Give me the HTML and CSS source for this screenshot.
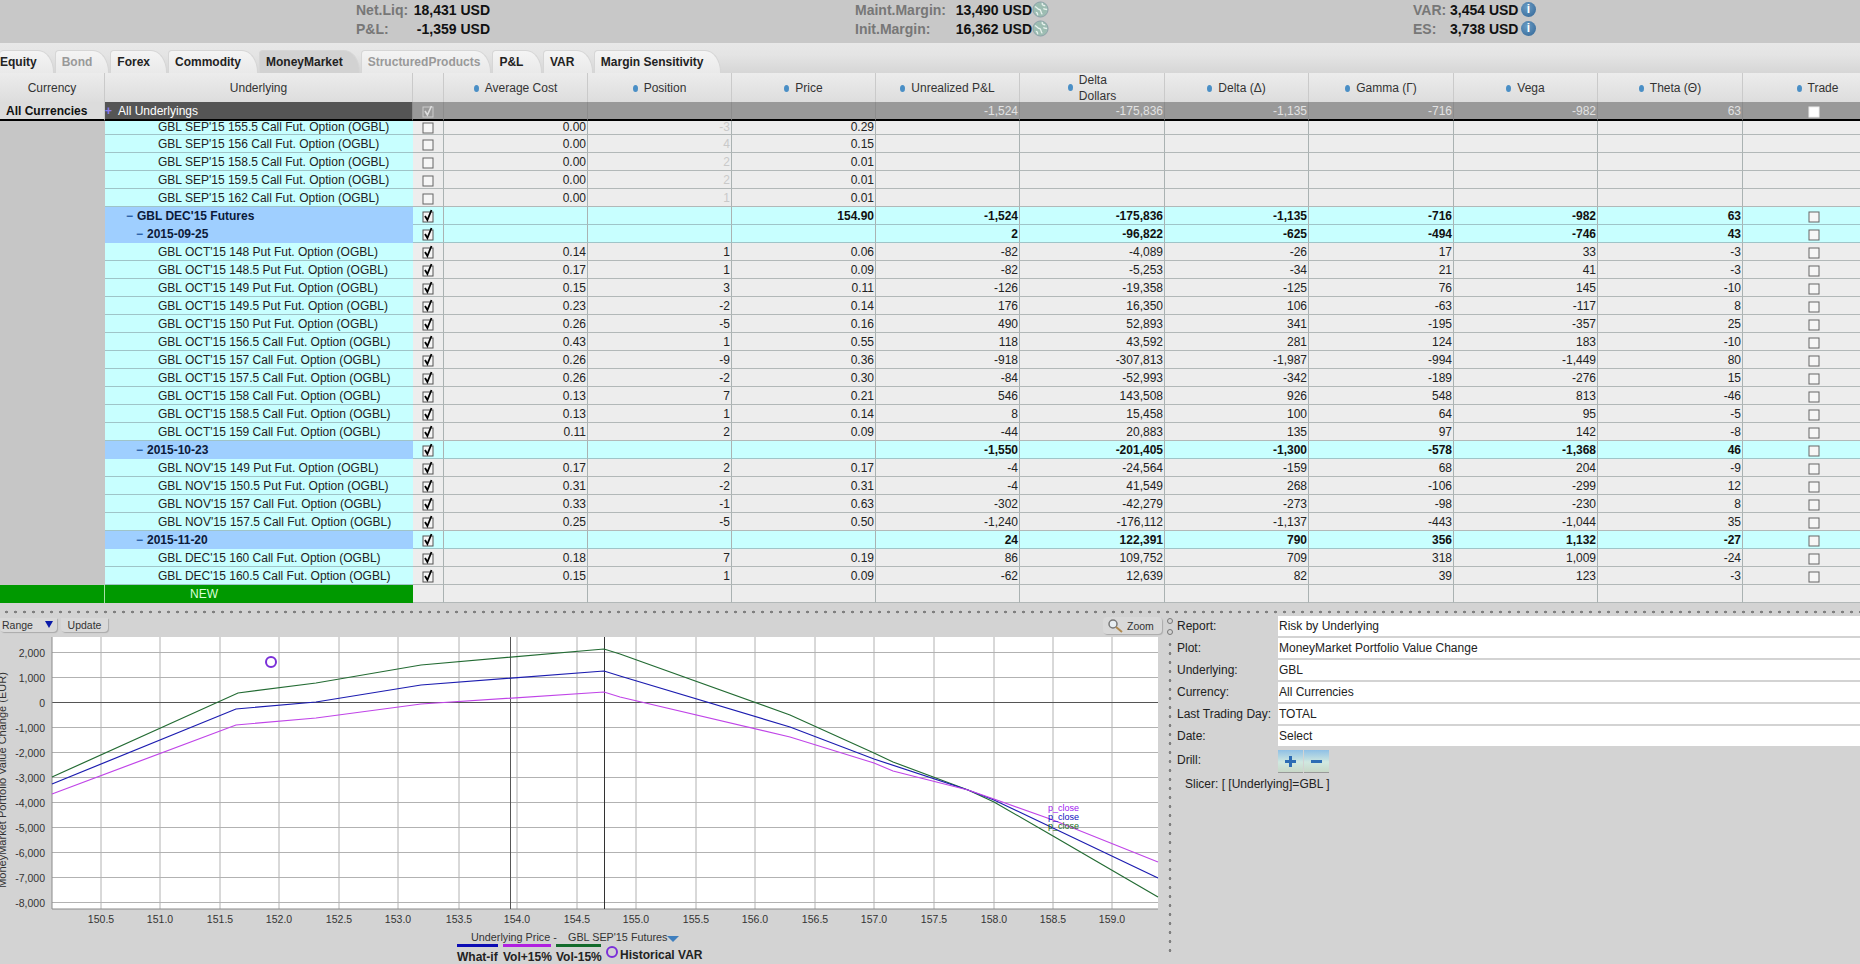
FILE: index.html
```html
<!DOCTYPE html>
<html lang="en">
<head>
    <meta charset="UTF-8">
    <meta name="viewport" content="width=device-width, initial-scale=1.0">
    <title>Risk Navigator</title>
    <link rel="stylesheet" href="styles.css">
</head>
<body>
    <svg class="defs" width="0" height="0">
        <symbol id="cb-off" viewBox="0 0 12 14"><rect x="1" y="3" width="10" height="10" fill="#f6f6f6" stroke="#666"/></symbol>
        <symbol id="cb-on" viewBox="0 0 12 14"><rect x="1" y="3" width="10" height="10" fill="#f6f6f6" stroke="#555"/><path d="M3 7l2.4 4L9.5 1" fill="none" stroke="#000" stroke-width="1.8"/></symbol>
        <symbol id="cb-mute" viewBox="0 0 12 14"><rect x="1" y="3" width="10" height="10" fill="#999" stroke="#ccc"/><path d="M3 7l2.4 4L9.5 2" fill="none" stroke="#ddd" stroke-width="1.6"/></symbol>
        <symbol id="cb-white" viewBox="0 0 12 14"><rect x="1" y="3" width="10" height="10" fill="#fff" stroke="#eee"/></symbol>
        <symbol id="globe" viewBox="0 0 18 18"><circle cx="9" cy="9" r="8" fill="#9dbdb2" stroke="#8aa0a8"/><path d="M3 6c3 1 3 3 5 3s1 4 3 5M11 2c-1 2 1 3 3 3M4 12c1 0 2 1 2 3M12 8c1 1 3 1 4 1" fill="none" stroke="#e8f2ee" stroke-width="1.4"/></symbol>
    </svg>

    <div class="summary">
        <div class="sum-group net">
            <span class="sum-label">Net.Liq:</span><span class="sum-value">18,431 USD</span>
            <span class="sum-label">P&amp;L:</span><span class="sum-value">-1,359 USD</span>
        </div>
        <div class="sum-group margin">
            <span class="sum-label">Maint.Margin:</span><span class="sum-value">13,490 USD</span><svg class="sum-icon"><use href="#globe"/></svg>
            <span class="sum-label">Init.Margin:</span><span class="sum-value">16,362 USD</span><svg class="sum-icon"><use href="#globe"/></svg>
        </div>
        <div class="sum-group var">
            <span class="sum-label">VAR:</span><span class="sum-value">3,454 USD</span><span class="info">i</span>
            <span class="sum-label">ES:</span><span class="sum-value">3,738 USD</span><span class="info">i</span>
        </div>
    </div>

    <div class="tabs">
        <div class="tab first">Equity</div>
        <div class="tab off">Bond</div>
        <div class="tab">Forex</div>
        <div class="tab">Commodity</div>
        <div class="tab active">MoneyMarket</div>
        <div class="tab off narrow">StructuredProducts</div>
        <div class="tab wide">P&amp;L</div>
        <div class="tab wide">VAR</div>
        <div class="tab">Margin Sensitivity</div>
    </div>

    <table class="grid grid-head">
        <colgroup><col class="c1"><col class="c2"><col class="c3"><col class="c4"><col class="c4"><col class="c4"><col class="c4"><col class="c5"><col class="c4"><col class="c5"><col class="c4"><col class="c5"><col class="c6"></colgroup>
        <tr class="heads">
            <th>Currency</th>
            <th>Underlying</th>
            <th></th>
            <th><i class="dot"></i>Average Cost</th>
            <th><i class="dot"></i>Position</th>
            <th><i class="dot"></i>Price</th>
            <th><i class="dot"></i>Unrealized P&amp;L</th>
            <th><div class="two"><i class="dot"></i><span>Delta<br>Dollars</span></div></th>
            <th><i class="dot"></i>Delta (Δ)</th>
            <th><i class="dot"></i>Gamma (Γ)</th>
            <th><i class="dot"></i>Vega</th>
            <th><i class="dot"></i>Theta (Θ)</th>
            <th class="trade-head"><i class="dot"></i>Trade</th>
        </tr>
        <tr class="all">
            <td>All Currencies</td>
            <td><i class="plus">+</i>All Underlyings</td>
            <td><svg class="cb"><use href="#cb-mute"/></svg></td>
            <td></td><td></td><td></td>
            <td>-1,524</td><td>-175,836</td><td>-1,135</td><td>-716</td><td>-982</td><td>63</td>
            <td><svg class="cb"><use href="#cb-white"/></svg></td>
        </tr>
    </table>

    <table class="grid grid-body">
        <colgroup><col class="c1"><col class="c2"><col class="c3"><col class="c4"><col class="c4"><col class="c4"><col class="c4"><col class="c5"><col class="c4"><col class="c5"><col class="c4"><col class="c5"><col class="c6"></colgroup>
        <tr class="first-row"><td></td><td>GBL SEP'15 155.5 Call Fut. Option (OGBL)</td><td><svg class="cb"><use href="#cb-off"/></svg></td><td>0.00</td><td class="faint">-3</td><td>0.29</td><td></td><td></td><td></td><td></td><td></td><td></td><td></td></tr>
        <tr><td></td><td>GBL SEP'15 156 Call Fut. Option (OGBL)</td><td><svg class="cb"><use href="#cb-off"/></svg></td><td>0.00</td><td class="faint">4</td><td>0.15</td><td></td><td></td><td></td><td></td><td></td><td></td><td></td></tr>
        <tr><td></td><td>GBL SEP'15 158.5 Call Fut. Option (OGBL)</td><td><svg class="cb"><use href="#cb-off"/></svg></td><td>0.00</td><td class="faint">2</td><td>0.01</td><td></td><td></td><td></td><td></td><td></td><td></td><td></td></tr>
        <tr><td></td><td>GBL SEP'15 159.5 Call Fut. Option (OGBL)</td><td><svg class="cb"><use href="#cb-off"/></svg></td><td>0.00</td><td class="faint">2</td><td>0.01</td><td></td><td></td><td></td><td></td><td></td><td></td><td></td></tr>
        <tr><td></td><td>GBL SEP'15 162 Call Fut. Option (OGBL)</td><td><svg class="cb"><use href="#cb-off"/></svg></td><td>0.00</td><td class="faint">1</td><td>0.01</td><td></td><td></td><td></td><td></td><td></td><td></td><td></td></tr>
        <tr class="grp lvl1"><td></td><td><i class="minus">−</i>GBL DEC'15 Futures</td><td><svg class="cb"><use href="#cb-on"/></svg></td><td></td><td></td><td>154.90</td><td>-1,524</td><td>-175,836</td><td>-1,135</td><td>-716</td><td>-982</td><td>63</td><td><svg class="cb"><use href="#cb-off"/></svg></td></tr>
        <tr class="grp lvl2"><td></td><td><i class="minus">−</i>2015-09-25</td><td><svg class="cb"><use href="#cb-on"/></svg></td><td></td><td></td><td></td><td>2</td><td>-96,822</td><td>-625</td><td>-494</td><td>-746</td><td>43</td><td><svg class="cb"><use href="#cb-off"/></svg></td></tr>
        <tr><td></td><td>GBL OCT'15 148 Put Fut. Option (OGBL)</td><td><svg class="cb"><use href="#cb-on"/></svg></td><td>0.14</td><td>1</td><td>0.06</td><td>-82</td><td>-4,089</td><td>-26</td><td>17</td><td>33</td><td>-3</td><td><svg class="cb"><use href="#cb-off"/></svg></td></tr>
        <tr><td></td><td>GBL OCT'15 148.5 Put Fut. Option (OGBL)</td><td><svg class="cb"><use href="#cb-on"/></svg></td><td>0.17</td><td>1</td><td>0.09</td><td>-82</td><td>-5,253</td><td>-34</td><td>21</td><td>41</td><td>-3</td><td><svg class="cb"><use href="#cb-off"/></svg></td></tr>
        <tr><td></td><td>GBL OCT'15 149 Put Fut. Option (OGBL)</td><td><svg class="cb"><use href="#cb-on"/></svg></td><td>0.15</td><td>3</td><td>0.11</td><td>-126</td><td>-19,358</td><td>-125</td><td>76</td><td>145</td><td>-10</td><td><svg class="cb"><use href="#cb-off"/></svg></td></tr>
        <tr><td></td><td>GBL OCT'15 149.5 Put Fut. Option (OGBL)</td><td><svg class="cb"><use href="#cb-on"/></svg></td><td>0.23</td><td>-2</td><td>0.14</td><td>176</td><td>16,350</td><td>106</td><td>-63</td><td>-117</td><td>8</td><td><svg class="cb"><use href="#cb-off"/></svg></td></tr>
        <tr><td></td><td>GBL OCT'15 150 Put Fut. Option (OGBL)</td><td><svg class="cb"><use href="#cb-on"/></svg></td><td>0.26</td><td>-5</td><td>0.16</td><td>490</td><td>52,893</td><td>341</td><td>-195</td><td>-357</td><td>25</td><td><svg class="cb"><use href="#cb-off"/></svg></td></tr>
        <tr><td></td><td>GBL OCT'15 156.5 Call Fut. Option (OGBL)</td><td><svg class="cb"><use href="#cb-on"/></svg></td><td>0.43</td><td>1</td><td>0.55</td><td>118</td><td>43,592</td><td>281</td><td>124</td><td>183</td><td>-10</td><td><svg class="cb"><use href="#cb-off"/></svg></td></tr>
        <tr><td></td><td>GBL OCT'15 157 Call Fut. Option (OGBL)</td><td><svg class="cb"><use href="#cb-on"/></svg></td><td>0.26</td><td>-9</td><td>0.36</td><td>-918</td><td>-307,813</td><td>-1,987</td><td>-994</td><td>-1,449</td><td>80</td><td><svg class="cb"><use href="#cb-off"/></svg></td></tr>
        <tr><td></td><td>GBL OCT'15 157.5 Call Fut. Option (OGBL)</td><td><svg class="cb"><use href="#cb-on"/></svg></td><td>0.26</td><td>-2</td><td>0.30</td><td>-84</td><td>-52,993</td><td>-342</td><td>-189</td><td>-276</td><td>15</td><td><svg class="cb"><use href="#cb-off"/></svg></td></tr>
        <tr><td></td><td>GBL OCT'15 158 Call Fut. Option (OGBL)</td><td><svg class="cb"><use href="#cb-on"/></svg></td><td>0.13</td><td>7</td><td>0.21</td><td>546</td><td>143,508</td><td>926</td><td>548</td><td>813</td><td>-46</td><td><svg class="cb"><use href="#cb-off"/></svg></td></tr>
        <tr><td></td><td>GBL OCT'15 158.5 Call Fut. Option (OGBL)</td><td><svg class="cb"><use href="#cb-on"/></svg></td><td>0.13</td><td>1</td><td>0.14</td><td>8</td><td>15,458</td><td>100</td><td>64</td><td>95</td><td>-5</td><td><svg class="cb"><use href="#cb-off"/></svg></td></tr>
        <tr><td></td><td>GBL OCT'15 159 Call Fut. Option (OGBL)</td><td><svg class="cb"><use href="#cb-on"/></svg></td><td>0.11</td><td>2</td><td>0.09</td><td>-44</td><td>20,883</td><td>135</td><td>97</td><td>142</td><td>-8</td><td><svg class="cb"><use href="#cb-off"/></svg></td></tr>
        <tr class="grp lvl2"><td></td><td><i class="minus">−</i>2015-10-23</td><td><svg class="cb"><use href="#cb-on"/></svg></td><td></td><td></td><td></td><td>-1,550</td><td>-201,405</td><td>-1,300</td><td>-578</td><td>-1,368</td><td>46</td><td><svg class="cb"><use href="#cb-off"/></svg></td></tr>
        <tr><td></td><td>GBL NOV'15 149 Put Fut. Option (OGBL)</td><td><svg class="cb"><use href="#cb-on"/></svg></td><td>0.17</td><td>2</td><td>0.17</td><td>-4</td><td>-24,564</td><td>-159</td><td>68</td><td>204</td><td>-9</td><td><svg class="cb"><use href="#cb-off"/></svg></td></tr>
        <tr><td></td><td>GBL NOV'15 150.5 Put Fut. Option (OGBL)</td><td><svg class="cb"><use href="#cb-on"/></svg></td><td>0.31</td><td>-2</td><td>0.31</td><td>-4</td><td>41,549</td><td>268</td><td>-106</td><td>-299</td><td>12</td><td><svg class="cb"><use href="#cb-off"/></svg></td></tr>
        <tr><td></td><td>GBL NOV'15 157 Call Fut. Option (OGBL)</td><td><svg class="cb"><use href="#cb-on"/></svg></td><td>0.33</td><td>-1</td><td>0.63</td><td>-302</td><td>-42,279</td><td>-273</td><td>-98</td><td>-230</td><td>8</td><td><svg class="cb"><use href="#cb-off"/></svg></td></tr>
        <tr><td></td><td>GBL NOV'15 157.5 Call Fut. Option (OGBL)</td><td><svg class="cb"><use href="#cb-on"/></svg></td><td>0.25</td><td>-5</td><td>0.50</td><td>-1,240</td><td>-176,112</td><td>-1,137</td><td>-443</td><td>-1,044</td><td>35</td><td><svg class="cb"><use href="#cb-off"/></svg></td></tr>
        <tr class="grp lvl2"><td></td><td><i class="minus">−</i>2015-11-20</td><td><svg class="cb"><use href="#cb-on"/></svg></td><td></td><td></td><td></td><td>24</td><td>122,391</td><td>790</td><td>356</td><td>1,132</td><td>-27</td><td><svg class="cb"><use href="#cb-off"/></svg></td></tr>
        <tr><td></td><td>GBL DEC'15 160 Call Fut. Option (OGBL)</td><td><svg class="cb"><use href="#cb-on"/></svg></td><td>0.18</td><td>7</td><td>0.19</td><td>86</td><td>109,752</td><td>709</td><td>318</td><td>1,009</td><td>-24</td><td><svg class="cb"><use href="#cb-off"/></svg></td></tr>
        <tr><td></td><td>GBL DEC'15 160.5 Call Fut. Option (OGBL)</td><td><svg class="cb"><use href="#cb-on"/></svg></td><td>0.15</td><td>1</td><td>0.09</td><td>-62</td><td>12,639</td><td>82</td><td>39</td><td>123</td><td>-3</td><td><svg class="cb"><use href="#cb-off"/></svg></td></tr>
        <tr class="new"><td></td><td>NEW</td><td></td><td></td><td></td><td></td><td></td><td></td><td></td><td></td><td></td><td></td><td></td></tr>
    </table>

    <div class="hsplit"></div>

    <div class="lower">
        <div class="chart-pane">
            <div class="chart-tools">
                <div class="btn range">Range<i class="tri"></i></div>
                <div class="btn update">Update</div>
                <div class="btn zoom">
                    <svg width="18" height="15" viewBox="0 0 18 15"><circle cx="6" cy="6" r="4" fill="#e8eef2" stroke="#777" stroke-width="1.5"/><path d="M9 9l6 5" stroke="#b08a50" stroke-width="2"/></svg>
                    Zoom
                </div>
            </div>
            <svg class="chart" width="1166" height="330" viewBox="0 634 1166 330">
                <rect class="plot" x="52" y="637" width="1106" height="272"/>
                <path class="gridline" d="M101 637V909M160 637V909M220 637V909M279 637V909M339 637V909M398 637V909M459 637V909M517 637V909M577 637V909M636 637V909M696 637V909M755 637V909M815 637V909M874 637V909M934 637V909M994 637V909M1053 637V909M1112 637V909"/>
                <path class="gridline" d="M52 652.5H1158M52 677.5H1158M52 727.5H1158M52 752.5H1158M52 777.5H1158M52 802.5H1158M52 827.5H1158M52 852.5H1158M52 877.5H1158M52 902.5H1158"/>
                <path class="zero" d="M52 702.5H1158"/>
                <path class="frame" d="M52 637V909H1158"/>
                <path class="marker thin" d="M510.5 637V909"/>
                <path class="marker" d="M604.5 637V909"/>

                <polyline class="line vol-down" points="52,777 238,693 316,683 421,665 604,649 620,654 790,715 874,753 893,762 968,790 994,802 1053,836 1158,897"/>
                <polyline class="line whatif" points="52,784 236,709 316,702 421,685 604,671 620,676 790,727 874,759 968,790 994,800 1053,828 1158,878"/>
                <polyline class="line vol-up" points="52,794 236,725 316,718 421,704 604,692 620,697 790,737 874,763 893,771 968,790 994,799 1053,820 1158,862"/>

                <circle class="hist" cx="271" cy="662" r="5"/>

                <text class="pclose c-up" x="1048" y="811">p_close</text>
                <text class="pclose c-what" x="1048" y="820">p_close</text>
                <text class="pclose c-down" x="1048" y="829">p_close</text>

                <g class="ytick">
                    <text x="45" y="657">2,000</text>
                    <text x="45" y="682">1,000</text>
                    <text x="45" y="707">0</text>
                    <text x="45" y="732">-1,000</text>
                    <text x="45" y="757">-2,000</text>
                    <text x="45" y="782">-3,000</text>
                    <text x="45" y="807">-4,000</text>
                    <text x="45" y="832">-5,000</text>
                    <text x="45" y="857">-6,000</text>
                    <text x="45" y="882">-7,000</text>
                    <text x="45" y="907">-8,000</text>
                </g>
                <g class="xtick">
                    <text x="101" y="923">150.5</text>
                    <text x="160" y="923">151.0</text>
                    <text x="220" y="923">151.5</text>
                    <text x="279" y="923">152.0</text>
                    <text x="339" y="923">152.5</text>
                    <text x="398" y="923">153.0</text>
                    <text x="459" y="923">153.5</text>
                    <text x="517" y="923">154.0</text>
                    <text x="577" y="923">154.5</text>
                    <text x="636" y="923">155.0</text>
                    <text x="696" y="923">155.5</text>
                    <text x="755" y="923">156.0</text>
                    <text x="815" y="923">156.5</text>
                    <text x="874" y="923">157.0</text>
                    <text x="934" y="923">157.5</text>
                    <text x="994" y="923">158.0</text>
                    <text x="1053" y="923">158.5</text>
                    <text x="1112" y="923">159.0</text>
                </g>
                <text class="ytitle" transform="translate(6 780) rotate(-90)">MoneyMarket Portfolio Value Change (EUR)</text>

                <text class="legend-title" x="471" y="941">Underlying Price -</text>
                <text class="legend-title" x="568" y="941">GBL SEP'15 Futures</text>
                <path class="legend-tri" d="M667 936h12l-6 6z"/>
                <rect class="bar-what" x="457" y="944" width="41" height="3"/>
                <rect class="bar-up" x="503" y="944" width="48" height="3"/>
                <rect class="bar-down" x="556" y="944" width="45" height="3"/>
                <text class="legend-name" x="457" y="961">What-if</text>
                <text class="legend-name" x="503" y="961">Vol+15%</text>
                <text class="legend-name" x="556" y="961">Vol-15%</text>
                <circle class="hist" cx="612" cy="952" r="5"/>
                <text class="legend-name" x="620" y="959">Historical VAR</text>
            </svg>
        </div>

        <div class="vsplit">
            <i class="grip"></i>
            <i class="grip"></i>
            <div class="vdots"></div>
        </div>

        <div class="side">
            <div class="side-row"><span>Report:</span><div class="field">Risk by Underlying</div></div>
            <div class="side-row"><span>Plot:</span><div class="field">MoneyMarket Portfolio Value Change</div></div>
            <div class="side-row"><span>Underlying:</span><div class="field">GBL</div></div>
            <div class="side-row"><span>Currency:</span><div class="field">All Currencies</div></div>
            <div class="side-row"><span>Last Trading Day:</span><div class="field">TOTAL</div></div>
            <div class="side-row"><span>Date:</span><div class="field">Select</div></div>
            <div class="side-row drill">
                <span>Drill:</span>
                <div class="drill-btns">
                    <div class="drill-btn"><svg width="13" height="13" viewBox="0 0 13 13"><path d="M6.5 1v11M1 6.5h11" stroke="#2c6cb4" stroke-width="3"/></svg></div>
                    <div class="drill-btn"><svg width="13" height="13" viewBox="0 0 13 13"><path d="M1 6.5h11" stroke="#2c6cb4" stroke-width="3"/></svg></div>
                </div>
            </div>
            <div class="slicer">Slicer: [ [Underlying]=GBL ]</div>
        </div>
    </div>
</body>
</html>
```

FILE: styles.css
```css
html, body {
    margin: 0;
    height: 964px;
    overflow: hidden;
}
body {
    font-family: "Liberation Sans", Arial, sans-serif;
    font-size: 12px;
    color: #222;
    background-color: #d3d3d3;
}
.defs {
    display: block;
    height: 0;
}

/* account summary */
.summary {
    height: 43px;
    padding-left: 356px;
    display: flex;
    background-color: #c8c8c8;
    box-sizing: border-box;
    font-size: 14px;
    font-weight: bold;
}
.sum-group {
    display: grid;
    grid-auto-rows: 19px;
    align-items: center;
}
.sum-group.net {
    width: 499px;
    grid-template-columns: 57px 77px;
}
.sum-group.margin {
    width: 558px;
    grid-template-columns: 100px 77px 18px;
}
.sum-group.var {
    column-gap: 1px;
    grid-template-columns: 36px 68px 18px;
}
.sum-label {
    color: #777;
}
.sum-value {
    text-align: right;
    color: #111;
    white-space: nowrap;
}
.sum-icon {
    width: 17px;
    height: 17px;
}
.info {
    width: 15px;
    height: 15px;
    margin-left: 2px;
    border-radius: 50%;
    background: radial-gradient(circle at 40% 35%, #6b9cc4, #2f6495);
    color: #fff;
    font-size: 12px;
    line-height: 15px;
    text-align: center;
}

/* product tabs */
.tabs {
    height: 30px;
    display: flex;
    align-items: flex-end;
    gap: 1px;
    box-sizing: border-box;
    background: linear-gradient(#e8e8e8, #e4e4e4 40%, #d6d6d6);
}
.tab {
    height: 22px;
    line-height: 23px;
    padding: 0 16px 0 6px;
    border: 1px solid #d6d6d6;
    border-bottom: none;
    border-radius: 4px 16px 0 0 / 4px 22px 0 0;
    background: linear-gradient(#f4f4f4, #e9e9e9);
    font-weight: bold;
    color: #222;
}
.tab.first {
    padding-left: 0;
    border-left: none;
}
.tab.off {
    color: #999;
}
.tab.active {
    background: #d2d2d2;
}
.tab.narrow {
    padding-right: 10px;
}
.tab.wide {
    padding-right: 17.5px;
}

/* positions grid */
.grid {
    width: 1860px;
    table-layout: fixed;
    border-collapse: separate;
    border-spacing: 0;
}
.c1 { width: 105px; }
.c2 { width: 308px; }
.c3 { width: 31px; }
.c4 { width: 144px; }
.c5 { width: 145px; }
.c6 { width: 117px; }
.grid td, .grid th {
    box-sizing: border-box;
    padding: 1px 1px 0 0;
    font-weight: normal;
    line-height: 16px;
    white-space: nowrap;
}
.grid td {
    height: 18px;
    text-align: right;
    background-color: #ededed;
    border-bottom: 1px solid #b2b8b8;
    border-right: 1px solid #aab2b2;
}
.grid .first-row td {
    height: 14px;
    padding-top: 0;
    line-height: 13px;
}
.heads th {
    height: 29px;
    padding: 0;
    text-align: center;
    background: linear-gradient(#ececec, #dddddd);
    border-right: 1px solid #cacaca;
    color: #333;
}
.heads .trade-head {
    padding-left: 32px;
    border-right: none;
}
.dot {
    display: inline-block;
    width: 5px;
    height: 7px;
    margin-right: 6px;
    border-radius: 50%;
    background-color: #4a8fc6;
}
.two {
    height: 29px;
    display: flex;
    justify-content: center;
    align-items: center;
    text-align: left;
}
.two span {
    display: block;
}

.grid .all td {
    height: 19px;
    padding-top: 2px;
    background-color: #999;
    color: #e2e2e2;
    border-right: 1px solid #8c8c8c;
    border-bottom: 2px solid #000;
    line-height: 15px;
}
.grid .all td:first-child {
    background-color: #dcdcdc;
    color: #111;
    font-weight: bold;
    text-align: left;
    padding-left: 6px;
    border-right-color: #cacaca;
}
.grid .all td:nth-child(2) {
    background-color: #555;
    color: #fff;
    text-align: left;
}
.plus {
    display: inline-block;
    width: 13px;
    color: #8a7cf0;
    font-style: normal;
    font-weight: bold;
}

.grid-body td:first-child {
    background-color: #c6c6c6;
    border-bottom: none;
    border-right: none;
}
.grid-body td:nth-child(2) {
    text-align: left;
    padding-left: 53px;
    background-color: #c8ffff;
    border-bottom-color: #9fc4c8;
    border-right: none;
}
.grid td:nth-child(3) {
    text-align: left;
    padding-left: 9px;
}
.grid td:last-child {
    text-align: left;
    padding-left: 65px;
    border-right: none;
}
.cb {
    display: block;
    width: 12px;
    height: 14px;
    margin-top: -1px;
}
.faint {
    color: #c9c9c9;
}

.grp td {
    background-color: #c8ffff;
    font-weight: bold;
    color: #111;
    border-bottom-color: #9fc4c8;
}
.grid-body .grp td:nth-child(2) {
    background-color: #9fcfff;
    color: #0c1a3a;
    border-bottom-color: #9fcfff;
}
.grid-body .lvl1 td:nth-child(2) {
    padding-left: 21px;
}
.grid-body .lvl2 td:nth-child(2) {
    padding-left: 31px;
}
.minus {
    display: inline-block;
    width: 11px;
    font-style: normal;
    color: #2a5fa8;
}
.grid-body .new td:first-child,
.grid-body .new td:nth-child(2) {
    background-color: #009900;
    border-bottom-color: #009900;
}
.grid-body .new td:first-child {
    border-right: 1px solid #a8e0a8;
}
.grid-body .new td:nth-child(2) {
    padding-left: 85px;
    color: #d8ffd8;
}

/* splitters */
.hsplit {
    height: 13px;
    background-image: radial-gradient(circle, #808080 1.2px, transparent 1.6px);
    background-size: 9px 4px;
    background-position: 2px 7px;
    background-repeat: repeat-x;
}
.vsplit {
    width: 11px;
    display: flex;
    flex-direction: column;
    align-items: center;
    gap: 5px;
    padding-top: 2px;
    box-sizing: border-box;
}
.grip {
    width: 6px;
    height: 6px;
    margin-left: -3px;
    border: 1px solid #777;
    border-radius: 50%;
    box-sizing: border-box;
}
.vdots {
    flex: 1;
    width: 4px;
    margin: 0 0 9px -3px;
    background-image: radial-gradient(circle, #808080 1.2px, transparent 1.6px);
    background-size: 4px 9px;
    background-repeat: repeat-y;
}

/* chart */
.lower {
    height: 348px;
    display: flex;
}
.chart-pane {
    width: 1166px;
    flex: none;
}
.chart-tools {
    height: 18px;
    display: flex;
    align-items: flex-start;
    gap: 4px;
    padding-top: 2px;
    box-sizing: border-box;
}
.btn {
    height: 14px;
    line-height: 14px;
    font-size: 10.5px;
    color: #333;
    border-radius: 0 0 4px 4px;
    background-color: #d9d9d9;
    box-shadow: 1px 1px 1px #aaa;
}
.btn.range {
    width: 57px;
    padding-left: 2px;
    box-sizing: border-box;
    display: flex;
    justify-content: space-between;
}
.tri {
    width: 0;
    height: 0;
    margin: 3px 4px 0 0;
    border-left: 4px solid transparent;
    border-right: 4px solid transparent;
    border-top: 7px solid #0a1aa8;
}
.btn.update {
    width: 47px;
    text-align: center;
}
.btn.zoom {
    height: 17px;
    width: 59px;
    margin: -1px 4px 0 auto;
    display: flex;
    align-items: center;
    gap: 2px;
    padding-left: 4px;
    box-sizing: border-box;
    border-radius: 4px;
}
.chart {
    display: block;
}
.plot {
    fill: #fff;
}
.gridline {
    fill: none;
    stroke: #b2b2b2;
    stroke-width: 1;
}
.zero {
    stroke: #555;
    stroke-width: 1;
}
.frame {
    fill: none;
    stroke: #8a8a8a;
}
.marker {
    stroke: #333;
    stroke-width: 1;
}
.marker.thin {
    stroke: #555;
}
.line {
    fill: none;
    stroke-width: 1.2;
}
.vol-down { stroke: #236b33; }
.whatif { stroke: #1c1cb0; }
.vol-up { stroke: #c045e8; }
.hist {
    fill: none;
    stroke: #7a2fd8;
    stroke-width: 2;
}
.chart text {
    font-family: "Liberation Sans", Arial, sans-serif;
    fill: #333;
}
.ytick text {
    font-size: 10.5px;
    text-anchor: end;
}
.xtick text {
    font-size: 10.5px;
    text-anchor: middle;
}
.ytitle {
    font-size: 11px;
    text-anchor: middle;
}
.chart .pclose {
    font-size: 9px;
}
.chart .c-up { fill: #a020f0; }
.chart .c-what { fill: #1010c0; }
.chart .c-down { fill: #1a6a1a; }
.chart .legend-title {
    font-size: 10.8px;
}
.legend-tri {
    fill: #3f7fbe;
}
.bar-what { fill: #0c0cb4; }
.bar-up { fill: #b020e0; }
.bar-down { fill: #136b2c; }
.chart .legend-name {
    font-size: 12px;
    font-weight: bold;
    fill: #222;
}

/* report settings */
.side {
    flex: 1;
}
.side-row {
    height: 22px;
    display: grid;
    grid-template-columns: 101px 1fr;
    align-items: start;
}
.side-row span {
    line-height: 21px;
    white-space: nowrap;
}
.field {
    height: 20px;
    line-height: 21px;
    padding-left: 1px;
    background-color: #fff;
}
.drill {
    height: 34px;
    padding-top: 2px;
    box-sizing: border-box;
}
.drill-btns {
    display: flex;
    gap: 1px;
}
.drill-btn {
    width: 25px;
    height: 23px;
    display: flex;
    align-items: center;
    justify-content: center;
    background: linear-gradient(#8fc0e6, #d0e8e0 55%, #c8d8c8);
    border-bottom: 1px solid #999;
    box-sizing: border-box;
}
.slicer {
    padding-left: 8px;
    margin-top: -5px;
}
```
